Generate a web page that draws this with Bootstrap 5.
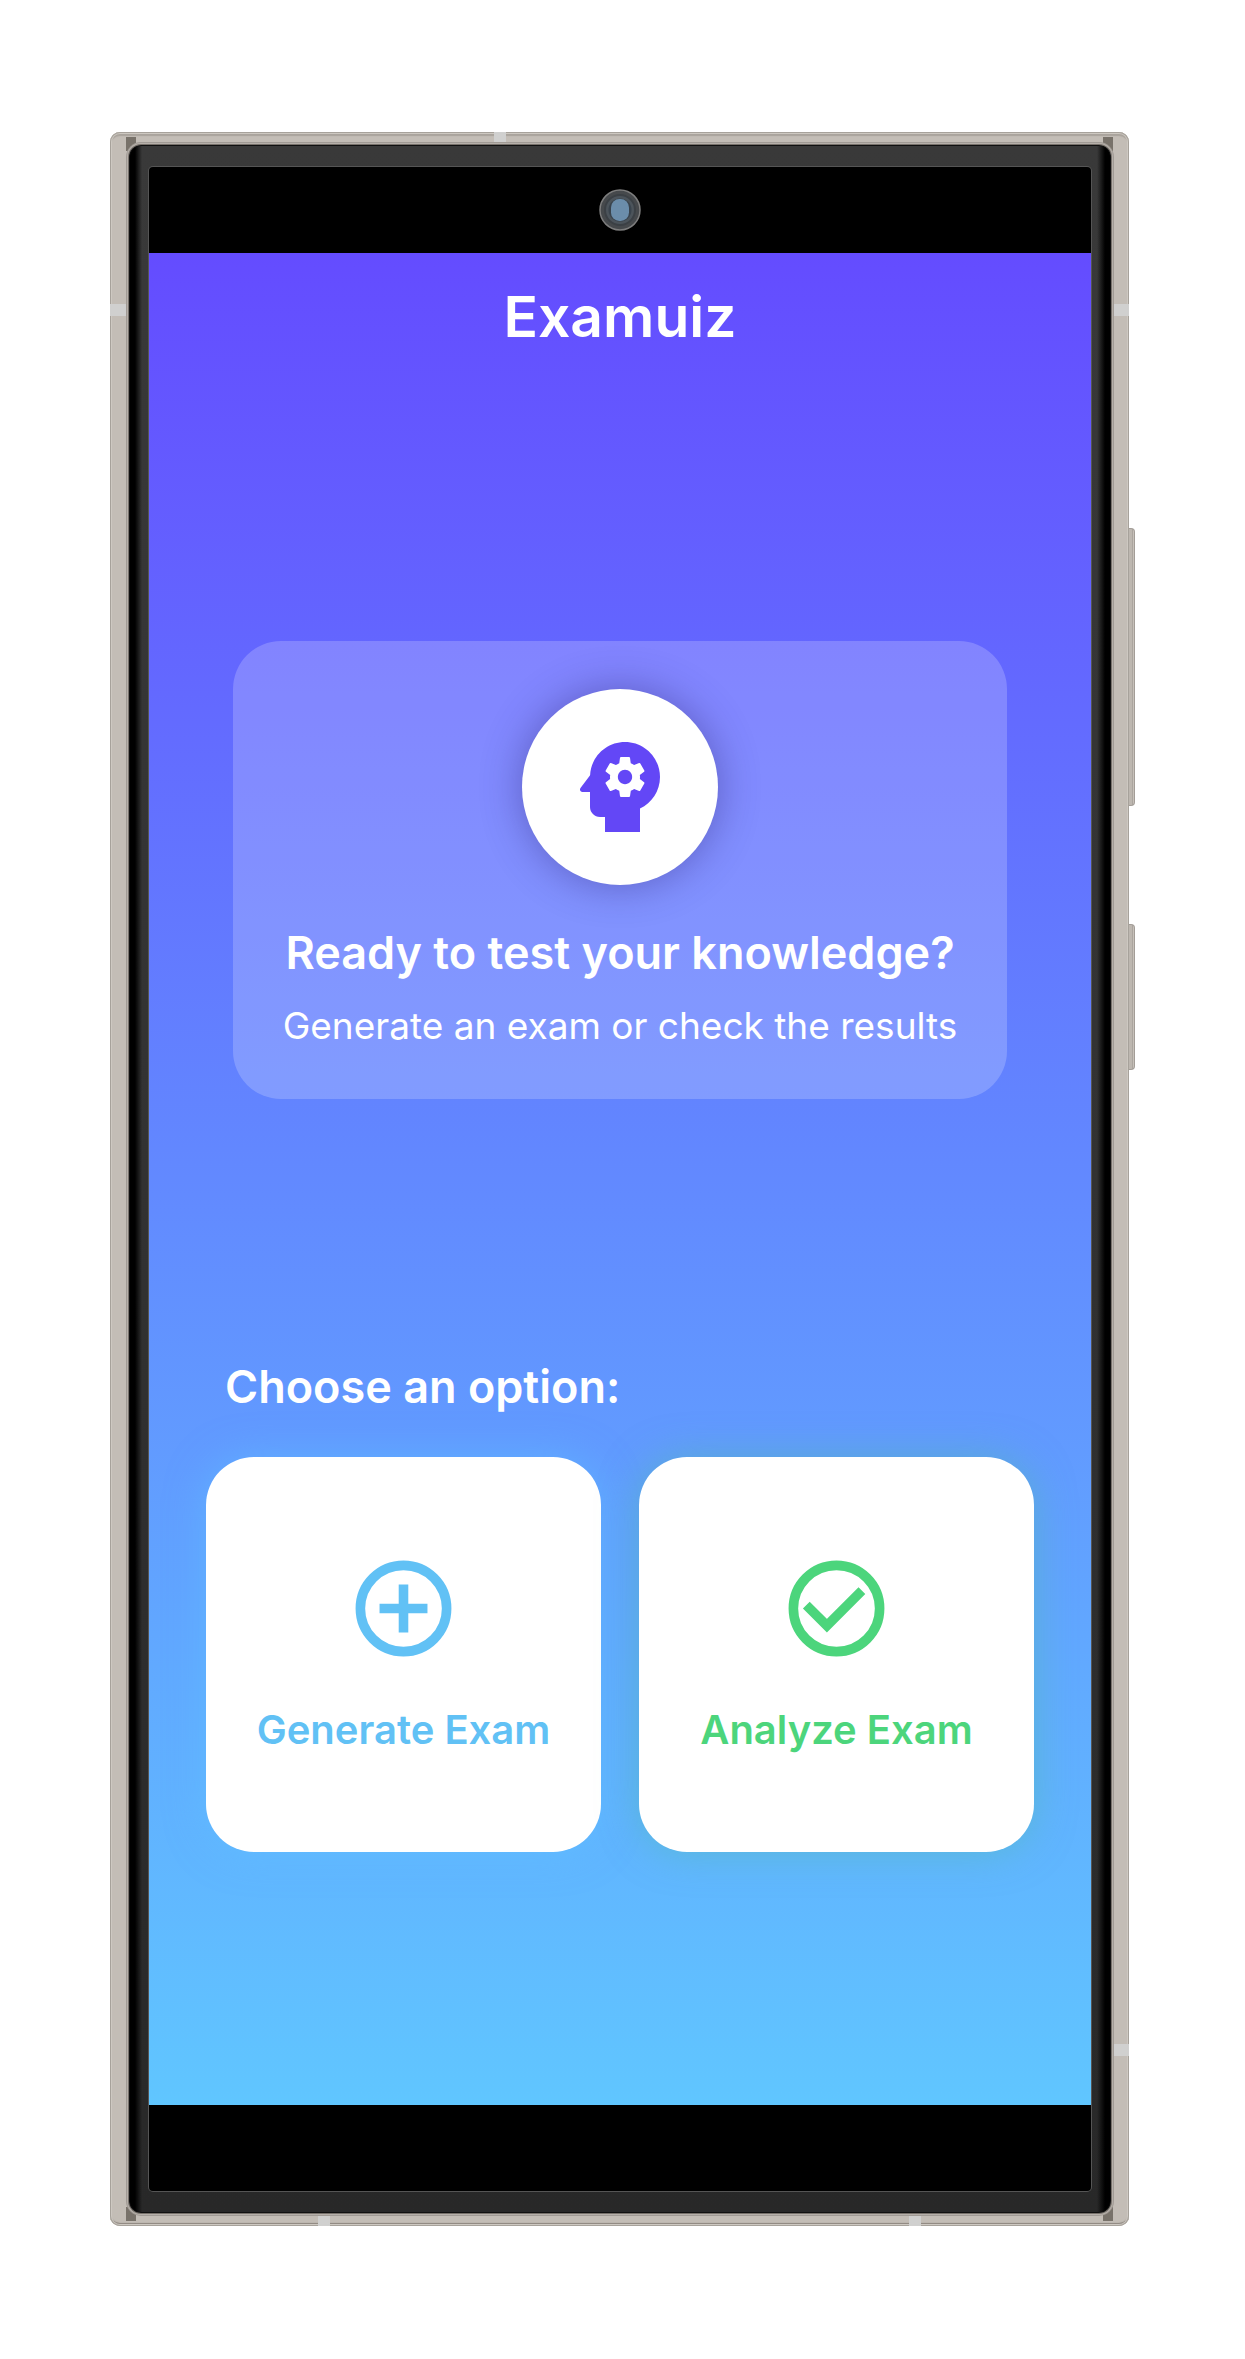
<!DOCTYPE html>
<html lang="en">
<head>
<meta charset="utf-8">
<meta name="viewport" content="width=device-width, initial-scale=1">
<title>Examuiz</title>
<link href="https://cdn.jsdelivr.net/npm/bootstrap@5.3.0/dist/css/bootstrap.min.css" rel="stylesheet">
<style>
  body { font-family: Inter, "Open Sans", sans-serif; background: #fff; }
  .stage { padding: 132px 116px 133px 110px; }

  /* metal body of the phone */
  .phone {
    padding: 13px 18px 13px 19px;
    border-radius: 10px;
    background: #c3bdb6;
    box-shadow: inset 0 0 0 1px #a7a29b, inset 0 0 0 2px #cdc8c1, inset 0 -3px 1px #8d867f, inset 0 4px 1px #aaa49d;
  }
  .bezel {
    padding: 22px 20px;
    border-radius: 12px;
    background:
      linear-gradient(90deg, #000 6px, transparent 13px, transparent calc(100% - 14px), #000 calc(100% - 6px)),
      linear-gradient(#393939, #323232 50%, #282828);
    box-shadow: 0 0 0 1px #77716b, 0 0 0 2px #b6b0aa, 0 0 0 3px #a19b95, inset 0 0 0 1px #111;
  }
  .glass { border-radius: 4px; background: #000; box-shadow: 0 0 0 1px #555; }
  .status-strip { height: 86px; }
  .nav-strip { height: 86px; }
  .lens { width: 42px; height: 42px; }

  /* hardware details lying over the body edge */
  .band { position: absolute; background: #d0d0cf; }
  .band-h { width: 17px; height: 12px; }
  .band-v { width: 12px; height: 13px; }
  .corner { position: absolute; width: 10px; height: 14px; background: #78726a; }
  .side-key {
    position: absolute; left: 100%; width: 6px;
    border: 1px solid #a39d97; border-left: 0; border-radius: 0 4px 4px 0;
    background: linear-gradient(90deg, #bdb7b0 50%, #8f8983 60%, #c7c1ba 80%);
  }

  /* application */
  .app { padding: 16px 57px 253px; background: linear-gradient(#644cff, #60c6ff); }
  .app-title { font-size: 57px; line-height: 96px; font-weight: 600; }
  .hero {
    margin: 276px 27px 0; padding: 48px 16px;
    border-radius: 48px; background: rgba(255, 255, 255, .2);
  }
  .hero-icon { width: 196px; height: 196px; color: #6347f6; box-shadow: 0 0 40px rgba(40, 30, 110, .42); }
  .hero-title { margin-top: 36px; font-size: 45px; line-height: 64px; font-weight: 600; }
  .hero-text { margin-top: 16px; font-size: 37px; line-height: 50px; font-weight: 400; }
  .choose { margin: 256px 19px 0; font-size: 45px; line-height: 64px; font-weight: 600; }
  .options { gap: 38px; margin-top: 38px; }
  .option {
    flex: 1 1 0; aspect-ratio: 1; border: 0; border-radius: 48px; background: #fff;
    font-size: 40px; line-height: 56px; font-weight: 600; gap: 36px;
  }
  .option-generate { color: #61c1f5; box-shadow: 0 0 38px rgba(96, 196, 255, .5); }
  .option-analyze { color: #4cd57c; box-shadow: 0 0 38px rgba(80, 190, 170, .5); }
</style>
</head>
<body>
<div class="stage">
  <div class="phone position-relative">
    <span class="corner" style="left:16px;top:5px"></span>
    <span class="corner" style="right:16px;top:5px"></span>
    <span class="corner" style="left:16px;bottom:5px"></span>
    <span class="corner" style="right:16px;bottom:5px"></span>
    <span class="band band-v" style="left:384px;top:0"></span>
    <span class="band band-v" style="left:208px;bottom:0"></span>
    <span class="band band-v" style="right:208px;bottom:0"></span>
    <span class="band band-h" style="left:0;top:172px"></span>
    <span class="band band-h" style="right:0;top:172px"></span>
    <span class="band band-h" style="right:0;bottom:170px"></span>
    <span class="side-key" style="top:396px;height:278px"></span>
    <span class="side-key" style="top:792px;height:146px"></span>

    <div class="bezel position-relative">
      <div class="glass">
        <div class="status-strip d-flex align-items-center justify-content-center">
          <svg class="lens" viewBox="0 0 42 42" aria-hidden="true">
            <circle cx="21" cy="21" r="20" fill="#46494c" stroke="#7d7d7d" stroke-width="1.5"/>
            <circle cx="21" cy="21" r="15" fill="#4c545b" stroke="#3b4045" stroke-width="2"/>
            <circle cx="21" cy="21" r="11.500" fill="#39434d"/>
            <rect x="12" y="10" width="18" height="22" rx="8.500" fill="#6b8dab"/>
          </svg>
        </div>

        <main class="app text-white">
          <h1 class="app-title text-center m-0">Examuiz</h1>

          <section class="hero d-flex flex-column align-items-center text-center">
            <div class="hero-icon rounded-circle bg-white d-flex align-items-center justify-content-center">
              <svg width="120" height="120" viewBox="0 0 24 24" fill="currentColor" aria-hidden="true">
                <path d="M13 8.570c-.79 0-1.430.64-1.430 1.430s.64 1.430 1.430 1.430 1.430-.64 1.430-1.430-.64-1.430-1.430-1.430z"/>
                <path d="M13 3C9.250 3 6.200 5.940 6.020 9.640L4.100 12.200c-.25.33-.01.8.4.8H6v3c0 1.100.9 2 2 2h1v3h7v-4.680c2.360-1.120 4-3.530 4-6.320 0-3.870-3.130-7-7-7zm3 7c0 .13-.01.26-.02.39l.83.66c.08.06.1.16.05.25l-.8 1.390c-.05.09-.16.12-.24.09l-.99-.4c-.21.16-.43.29-.67.39L14 13.830c-.01.1-.1.17-.2.17h-1.600c-.1 0-.18-.07-.2-.17l-.15-1.060c-.25-.1-.47-.23-.68-.39l-.99.4c-.09.03-.2 0-.25-.09l-.8-1.390c-.05-.08-.03-.19.05-.25l.84-.66c-.01-.13-.02-.26-.02-.39s.02-.27.04-.39l-.85-.66c-.08-.06-.1-.16-.05-.26l.8-1.380c.05-.09.15-.12.24-.09l1 .4c.2-.15.43-.29.67-.39L12 6.170c.02-.1.1-.17.2-.17h1.600c.1 0 .18.07.2.17l.15 1.060c.24.1.46.23.67.39l1-.4c.09-.03.2 0 .24.09l.8 1.380c.05.09.03.2-.05.26l-.85.66c.03.12.04.25.04.39z"/>
              </svg>
            </div>
            <h2 class="hero-title mb-0">Ready to test your knowledge?</h2>
            <p class="hero-text mb-0">Generate an exam or check the results</p>
          </section>

          <h2 class="choose mb-0">Choose an option:</h2>
          <div class="options d-flex">
            <button type="button" class="option option-generate d-flex flex-column align-items-center justify-content-center p-0">
              <svg width="115" height="115" viewBox="0 0 24 24" fill="none" stroke="currentColor" stroke-width="2" aria-hidden="true">
                <circle cx="12" cy="12" r="9"/><path d="M12 7v10M7 12h10"/>
              </svg>
              Generate Exam
            </button>
            <button type="button" class="option option-analyze d-flex flex-column align-items-center justify-content-center p-0">
              <svg width="115" height="115" viewBox="0 0 24 24" fill="none" stroke="currentColor" stroke-width="2" aria-hidden="true">
                <circle cx="12" cy="12" r="9"/><path d="M5.700 11.300L10 15.590l7.300-7.300"/>
              </svg>
              Analyze Exam
            </button>
          </div>
        </main>
        <div class="nav-strip"></div>
      </div>
    </div>
  </div>
</div>
<script src="https://cdn.jsdelivr.net/npm/bootstrap@5.3.0/dist/js/bootstrap.bundle.min.js"></script>
</body>
</html>
